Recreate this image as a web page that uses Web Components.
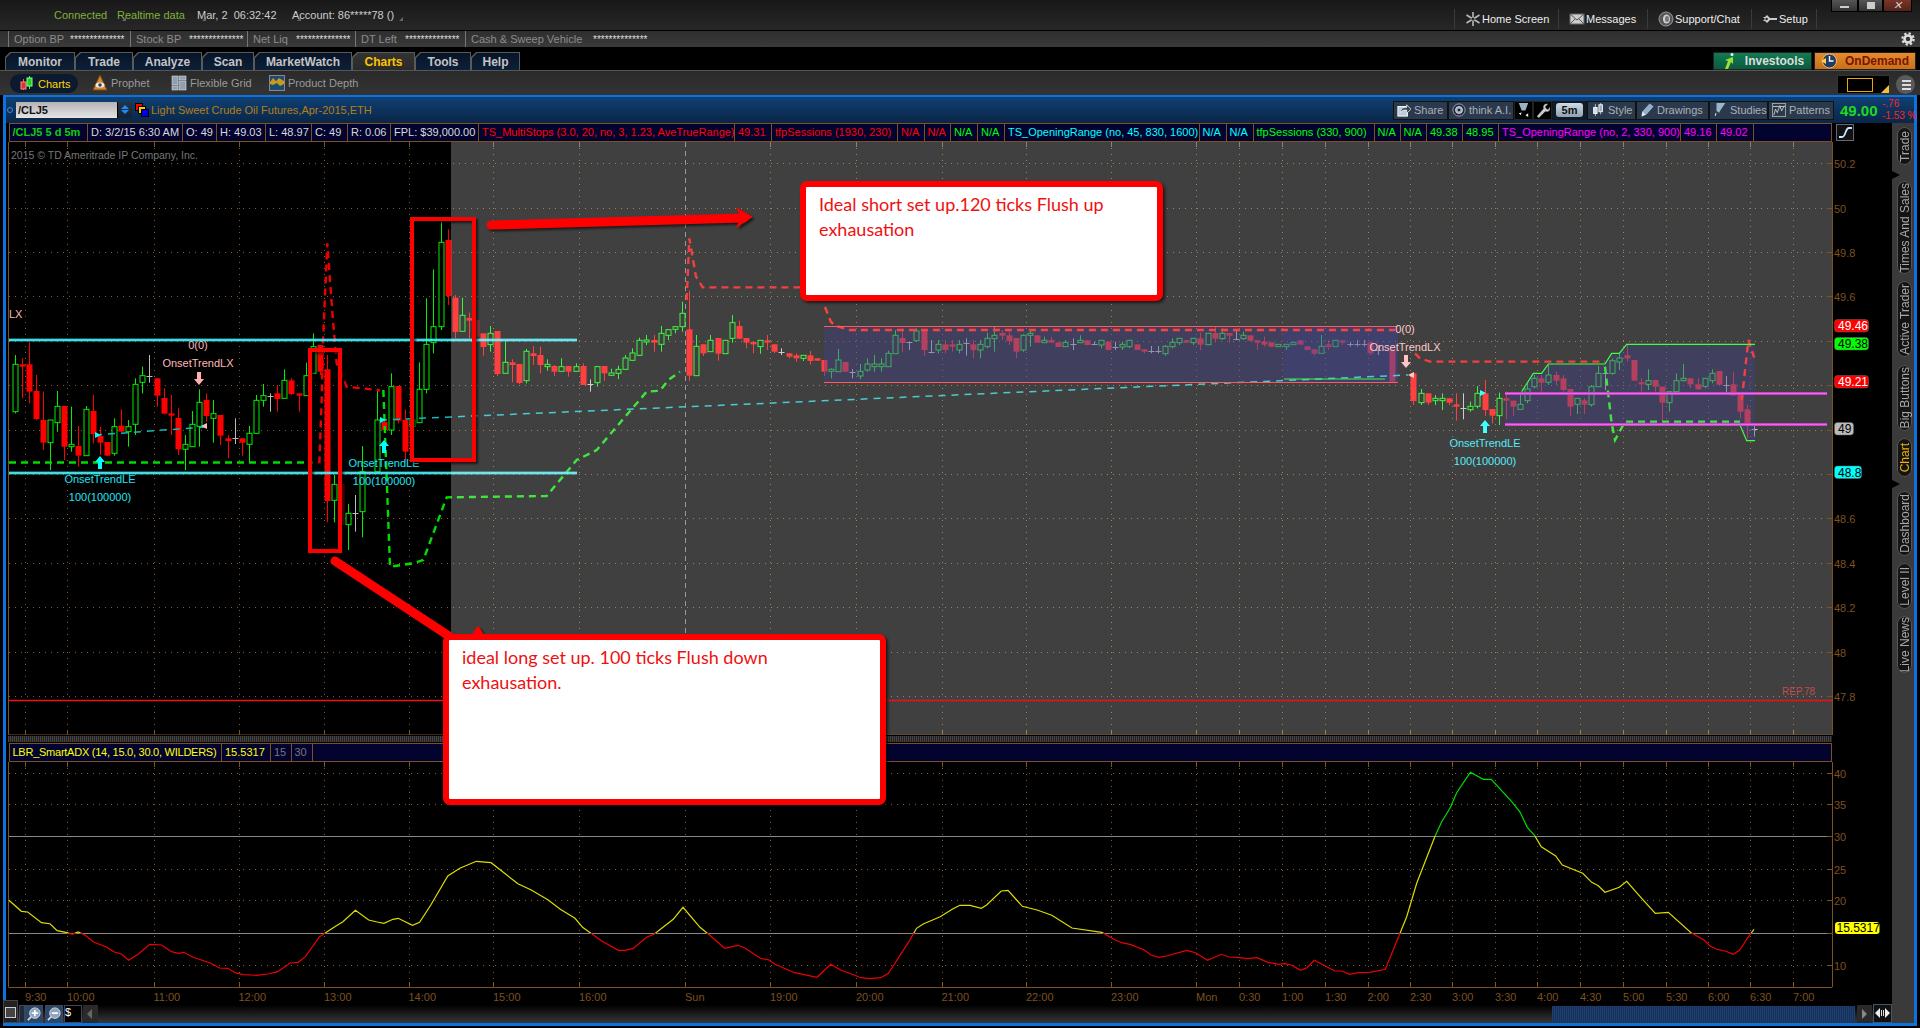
<!DOCTYPE html>
<html>
<head>
<meta charset="utf-8">
<title>Charts</title>
<style>
    html, body { margin: 0; padding: 0; background: #000; overflow: hidden; }
    body { width: 1920px; height: 1028px; position: relative; font: 11px "Liberation Sans", Arial, sans-serif; }
</style>
</head>
<body>
<tos-titlebar>
    <tos-nav-link icon="home" style="width:104px">Home Screen</tos-nav-link>
    <tos-nav-link icon="mail" style="width:89px">Messages</tos-nav-link>
    <tos-nav-link icon="chat" style="width:104px">Support/Chat</tos-nav-link>
    <tos-nav-link icon="setup" style="width:66px">Setup</tos-nav-link>
</tos-titlebar>
<tos-infobar></tos-infobar>
<tos-tabs>
    <tos-tab style="width:70px">Monitor</tos-tab>
    <tos-tab style="width:58px">Trade</tos-tab>
    <tos-tab style="width:69px">Analyze</tos-tab>
    <tos-tab style="width:52px">Scan</tos-tab>
    <tos-tab style="width:98px">MarketWatch</tos-tab>
    <tos-tab active style="width:63px">Charts</tos-tab>
    <tos-tab style="width:56px">Tools</tos-tab>
    <tos-tab style="width:49px">Help</tos-tab>
</tos-tabs>
<tos-subbar></tos-subbar>
<tos-panel>
    <tos-chart-header slot="header"></tos-chart-header>
    <tos-legend></tos-legend>
    <tos-price-chart></tos-price-chart>
    <div style="height:6px;margin:1px 60px 1px 2px;background:repeating-linear-gradient(90deg,#444 0 1px,#222 1px 2px)"></div>
    <tos-adx-legend></tos-adx-legend>
    <tos-adx-chart></tos-adx-chart>
    <tos-scrollbar></tos-scrollbar>
    <tos-side-tabs slot="side"></tos-side-tabs>
</tos-panel>
<tos-annotations>
    <tos-callout left="800" top="181" width="363" height="120">Ideal short set up.120 ticks Flush up<br>exhausation</tos-callout>
    <tos-callout left="443" top="634" width="443" height="171">ideal long set up. 100 ticks Flush down<br>exhausation.</tos-callout>
</tos-annotations>

<script>
const FONT = `"Liberation Sans", Arial, sans-serif`;
const BROWN = '#7d5120';

// hand drawn icons, 16x16 unless the view box says otherwise
const ICONS = {
    home: `<g stroke="#bbb" stroke-width="1.6"><path d="M8 1v14M1.5 4l13 8M1.5 12l13-8"/></g><circle cx="8" cy="8" r="1.6" fill="#222"/>`,
    mail: `<rect x="1" y="3" width="14" height="10" fill="#ccc" stroke="#666"/><path d="M1 3l7 6 7-6M1 13l5-5M15 13l-5-5" fill="none" stroke="#555"/>`,
    chat: `<circle cx="8" cy="8" r="7" fill="#555" stroke="#999"/><ellipse cx="8.5" cy="8" rx="3.6" ry="4.6" fill="#ccc"/><ellipse cx="9" cy="8" rx="2" ry="3" fill="#777"/>`,
    setup: `<path d="M1 6h2l2-2 3 3h7v2H8l-3 3-2-2H1l2-2z" fill="#ccc"/><circle cx="4.6" cy="8" r="1.2" fill="#222"/>`,
    gear: `<circle cx="8" cy="8" r="4" fill="none" stroke="#ddd" stroke-width="3"/><circle cx="8" cy="8" r="6.4" fill="none" stroke="#ddd" stroke-width="2.6" stroke-dasharray="2.6 2.4"/>`,
    candles: `<path d="M4.500 3v11" stroke="#f55"/><rect x="2" y="6" width="5" height="7" fill="#d33" stroke="#f88"/><path d="M10.500 0v13" stroke="#4f4"/><rect x="8" y="2" width="5" height="8" fill="#2c2" stroke="#8f8"/>`,
    prophet: `<path d="M8 0l7 15H1z" fill="#d8892c" stroke="#7a4a14"/><ellipse cx="8" cy="10" rx="4.500" ry="2.600" fill="#eee"/><circle cx="8" cy="10" r="1.800" fill="#246"/>`,
    grid: `<g fill="#8ea0b2" stroke="#ddd" stroke-width=".6"><rect x="1" y="1" width="6" height="9"/><rect x="8" y="1" width="7" height="4"/><rect x="8" y="6" width="7" height="9"/><rect x="1" y="11" width="6" height="4"/></g>`,
    depth: `<rect x=".5" y=".5" width="15" height="15" fill="#1d4a73" stroke="#888"/><path d="M1 7l3-4 3 3 3-3 5 3v3l-4 2-3-3-4 2-3-1z" fill="#c79a1c"/>`,
    share: `<rect x="1" y="4" width="11" height="11" fill="#bcd" stroke="#fff"/><path d="M4 11c0-5 3-6 7-6V2l5 5-5 5V8c-3 0-5 0-7 3z" fill="#345" stroke="#fff" stroke-width=".8"/>`,
    think: `<circle cx="8" cy="8" r="7" fill="#224" stroke="#aaa"/><circle cx="8" cy="8" r="4" fill="#9ab" stroke="#ddd"/><circle cx="8" cy="8" r="1.500" fill="#123"/>`,
    funnel: `<path d="M4 0h10l-6 9-1 2-3-2z" fill="#9ab4c8"/><path d="M3 11l1 1-1 3-1-1z" fill="#ddd"/>`,
    filterdl: `<path d="M3 0h10l-3 8H6z" fill="#9ab4c8"/><path d="M3 11l2 2 1-3zM13 15l-3-2 3-2z" fill="#eee"/>`,
    wrench: `<path d="M2 14l7-8c-1-3 1-6 5-5l-3 3 1 2 2 1 2-3c1 4-2 6-5 5l-7 7z" fill="#ccc" stroke="#333" stroke-width=".4"/>`,
    style: `<path d="M5 1v14M11 0v13" stroke="#bcd"/><rect x="3" y="5" width="4" height="7" fill="#cde" stroke="#fff"/><rect x="9" y="2" width="4" height="8" fill="#9ab" stroke="#fff"/>`,
    pencil: `<path d="M2 15l1-5 8-9 4 3-8 9z" fill="#8fb0cc" stroke="#dde" stroke-width=".6"/><path d="M2 15l1-5 3 3z" fill="#eee"/>`,
    patterns: `<rect x=".5" y=".5" width="15" height="15" fill="none" stroke="#aaa"/><path d="M2 14l2-7 2 4 3-8 2 6 3-6" fill="none" stroke="#ccc"/><path d="M1 4h14" stroke="#ccc"/>`,
    investools: `<path d="M4 16l3-8-3-1 8-3v7l-2-2-3 7z" fill="#9be03a"/><circle cx="11" cy="1.500" r="1.500" fill="#dfe"/>`,
    ondemand: `<circle cx="8.500" cy="8" r="7" fill="#223a66" stroke="#f0c060"/><path d="M8.500 3v5h4" fill="none" stroke="#fff" stroke-width="1.400"/><path d="M0 8l5-3v6z" fill="#ffd040"/>`,
    zoomin: `<path d="M1 15l4-4" stroke="#cde" stroke-width="2"/><circle cx="9" cy="7" r="6" fill="#8fa6ba" stroke="#dde"/><path d="M9 3.500v7M5.500 7h7" stroke="#fff" stroke-width="2"/>`,
    zoomout: `<path d="M1 15l4-4" stroke="#cde" stroke-width="2"/><circle cx="9" cy="7" r="6" fill="#8fa6ba" stroke="#dde"/><path d="M5.500 7h7" stroke="#fff" stroke-width="2"/>`,
};

class TosIcon extends HTMLElement {
    connectedCallback(){
        let size = this.getAttribute('size') || 16;
        this.attachShadow({mode: 'open'}).innerHTML = `
            <style>:host { display: inline-flex; flex: none; }</style>
            <svg width="${size}" height="${size}" viewBox="0 0 16 16">${ICONS[this.getAttribute('name')]}</svg>`;
    }
}

class TosTitlebar extends HTMLElement {
    connectedCallback(){
        this.attachShadow({mode: 'open'}).innerHTML = `
            <style>
                :host { display: flex; height: 30px; border-bottom: 1px solid #000; align-items: center;
                    background: linear-gradient(#181818, #272727); color: #ccc; font: 11px ${FONT}; }
                .status { display: flex; margin-left: 54px; }
                .status span { position: relative; }
                .status span::after { content: ''; position: absolute; right: -9px; bottom: 0;
                    border: 2px solid transparent; border-right-color: #666; border-bottom-color: #666; }
                .green { color: #7fb13a; }
                .links { display: flex; margin-left: auto; height: 20px; margin-top: 8px; }
                .win { display: flex; align-self: flex-start; margin: 0 8px 0 14px; height: 12px; }
                .win i { display: flex; align-items: center; justify-content: center; border: 1px solid #000; border-top: 0;
                    background: linear-gradient(#555, #333); box-sizing: border-box; }
                .win b { display: block; background: #ccc; }
            </style>
            <div class="status">
                <span class="green" style="width:63px">Connected</span>
                <span class="green" style="width:80px">Realtime data</span>
                <span style="width:95px">Mar, 2&nbsp;&nbsp;06:32:42</span>
                <span>Account: 86*****78 ()</span>
            </div>
            <div class="links"><slot></slot></div>
            <div class="win">
                <i style="width:27px"><b style="width:9px;height:2px;margin-top:3px"></b></i>
                <i style="width:25px"><b style="width:8px;height:7px"></b></i>
                <i style="width:29px;background:linear-gradient(#7a3428,#54231b);font:bold 10px ${FONT};color:#ddd;font-style:normal">✕</i>
            </div>`;
    }
}

class TosNavLink extends HTMLElement {
    connectedCallback(){
        this.attachShadow({mode: 'open'}).innerHTML = `
            <style>
                :host { display: flex; align-items: center; box-sizing: border-box; padding-left: 10px; gap: 1px;
                    border-left: 1px solid #3a3a3a; color: #eee; font: 11px ${FONT}; }
                :host(:last-child) { border-right: 1px solid #3a3a3a; }
            </style>
            <tos-icon name="${this.getAttribute('icon')}"></tos-icon><slot></slot>`;
    }
}

class TosInfobar extends HTMLElement {
    connectedCallback(){
        let cells = [['Option BP', 122, 56], ['Stock BP', 117, 53], ['Net Liq', 108, 43], ['DT Left', 110, 44], ['Cash & Sweep Vehicle', 300, 122]];
        this.attachShadow({mode: 'open'}).innerHTML = `
            <style>
                :host { display: flex; height: 16px; padding-left: 8px; align-items: center; position: relative;
                    background: linear-gradient(#2e2e2e, #3a3a3a); color: #8c8c8c; font: 11px ${FONT}; }
                div { display: flex; box-sizing: border-box; height: 16px; align-items: center; padding-left: 5px; border-left: 1px solid #777; }
                span { color: #ddd; font-size: 10px; white-space: nowrap; }
                b { display: block; font-weight: normal; flex: none; }
                tos-icon { position: absolute; right: 5px; top: 1px; }
            </style>
            ${cells.map(c => `<div style="width:${c[1]}px"><b style="width:${c[2]}px">${c[0]}</b><span>**************</span></div>`).join('')}
            <tos-icon name="gear" size="14"></tos-icon>`;
    }
}

class TosTabs extends HTMLElement {
    connectedCallback(){
        this.attachShadow({mode: 'open'}).innerHTML = `
            <style>
                :host { display: flex; height: 18px; margin-top: 5px; padding-left: 5px; }
                .right { display: flex; margin-left: auto; margin-right: 4px; gap: 2px; font: bold 12px ${FONT}; }
                .right div { display: flex; align-items: center; justify-content: center; gap: 8px; height: 18px; box-sizing: border-box; border: 1px solid #222; }
                .inv { width: 99px; background: linear-gradient(#127a52, #0b5a3f); color: #ddd; }
                .dem { width: 102px; background: linear-gradient(#e68a2e, #c86f18); color: #7a1500; }
            </style>
            <slot></slot>
            <div class="right">
                <div class="inv"><tos-icon name="investools"></tos-icon>Investools</div>
                <div class="dem"><tos-icon name="ondemand"></tos-icon>OnDemand</div>
            </div>`;
    }
}

class TosTab extends HTMLElement {
    connectedCallback(){
        let active = this.hasAttribute('active');
        this.attachShadow({mode: 'open'}).innerHTML = `
            <style>
                :host { display: block; background: #5a5a5a; padding: 1px 1px 0; box-sizing: border-box;
                    clip-path: polygon(5px 0, 100% 0, 100% 100%, 0 100%, 0 5px); }
                div { height: 100%; display: flex; align-items: center; justify-content: center;
                    clip-path: polygon(5px 0, 100% 0, 100% 100%, 0 100%, 0 5px);
                    background: ${active ? 'linear-gradient(#333, #2a2a2a)' : 'linear-gradient(#071428, #0c2038)'};
                    color: ${active ? '#ffc400' : '#c4c4c4'}; font: bold 12px ${FONT}; }
            </style>
            <div><slot></slot></div>`;
    }
}

class TosSubbar extends HTMLElement {
    connectedCallback(){
        this.attachShadow({mode: 'open'}).innerHTML = `
            <style>
                :host { display: flex; height: 24px; border-top: 1px solid #555; align-items: center; position: relative;
                    background: linear-gradient(#2a2a2a, #343434); color: #9a9a9a; font: 11px ${FONT}; }
                .it { display: flex; align-items: center; gap: 3px; position: absolute; top: 4px; }
                .pill { left: 10px; top: 3px; width: 68px; height: 19px; box-sizing: border-box; padding-left: 9px; gap: 3px;
                    background: #0b1a2e; border-radius: 10px; color: #ffd800; }
                .lay { position: absolute; left: 1837px; top: 4px; width: 53px; height: 19px; box-sizing: border-box;
                    background: #000; border: 1px solid #333; }
                .lay i { position: absolute; left: 9px; top: 2px; width: 26px; height: 14px; border: 1px solid #f0a800; box-sizing: border-box; }
                .lay b { position: absolute; right: 0; bottom: 0; border: 4px solid transparent; border-right-color: #f0c040; border-bottom-color: #f0c040; }
                .menu { position: absolute; left: 1896px; top: 4px; width: 19px; height: 19px; border-radius: 50%;
                    background: #5a5a5a; }
                .menu i { position: absolute; left: 6px; right: 4px; height: 2px; background: #ddd; }
            </style>
            <div class="it pill"><tos-icon name="candles"></tos-icon>Charts</div>
            <div class="it" style="left:92px"><tos-icon name="prophet"></tos-icon>Prophet</div>
            <div class="it" style="left:171px"><tos-icon name="grid"></tos-icon>Flexible Grid</div>
            <div class="it" style="left:269px"><tos-icon name="depth"></tos-icon>Product Depth</div>
            <div class="lay"><i></i><b></b></div>
            <div class="menu"><i style="top:5px"></i><i style="top:9px"></i><i style="top:13px"></i></div>`;
    }
}

class TosPanel extends HTMLElement {
    connectedCallback(){
        this.attachShadow({mode: 'open'}).innerHTML = `
            <style>
                :host { display: flex; flex-direction: column; box-sizing: border-box; width: 1914px; height: 931px; margin-left: 3px;
                    border: 3px solid #0b72e0; border-top-width: 2px; background: #000; }
                .row { display: flex; flex: 1; min-height: 0; }
                .main { width: 1886px; display: flex; flex-direction: column; }
            </style>
            <slot name="header"></slot>
            <div class="row">
                <div class="main"><slot></slot></div>
                <slot name="side"></slot>
            </div>`;
    }
}

class TosChartHeader extends HTMLElement {
    connectedCallback(){
        let btn = (w, icon, text) => `<div class="btn" style="width:${w}px"><tos-icon name="${icon}" size="14"></tos-icon>${text}</div>`;
        this.attachShadow({mode: 'open'}).innerHTML = `
            <style>
                :host { display: flex; height: 26px; align-items: center; position: relative;
                    background: linear-gradient(#0f4073, #0a2648); font: 11px ${FONT}; }
                .dot { width: 4px; height: 4px; margin-left: 1px; border: 1px solid #3a8ae0; border-radius: 50%; }
                .sym { width: 101px; height: 16px; margin-left: 3px; box-sizing: border-box; padding: 2px 2px; color: #111; font-weight: bold;
                    background: linear-gradient(#b4b4b4, #e4e4e4); }
                .spin { width: 15px; height: 16px; background: linear-gradient(#234, #123); position: relative; border-left: 1px solid #000; box-sizing: border-box; }
                .spin i { position: absolute; left: 3px; border: 4px solid transparent; }
                .flag { margin-left: 3px; width: 13px; height: 14px; position: relative; }
                .flag i { position: absolute; width: 6px; height: 6px; border: 1px solid #000; }
                .title { margin-left: 3px; color: #b37f18; }
                .btns { display: flex; margin-left: auto; height: 19px; }
                .btn { display: flex; align-items: center; gap: 3px; box-sizing: border-box; padding-left: 3px; height: 19px; white-space: nowrap; overflow: hidden;
                    background: #2a3a4c; border: 1px solid #111; color: #aab0b8; }
                .ib { width: 19px; height: 19px; background: #000; box-sizing: border-box; padding: 1px; border: 1px solid #222; }
                .five { width: 35px; display: flex; align-items: center; justify-content: center; background: #0f1a24; height: 19px; }
                .five b { background: linear-gradient(#cfdbe6, #8ea2b4); color: #111; font: bold 11px ${FONT}; padding: 1px 6px; border-radius: 3px; }
                .last { width: 80px; display: flex; align-items: center; padding-left: 6px; box-sizing: border-box; white-space: nowrap; }
                .last b { color: #1cdc1c; font: bold 15px ${FONT}; width: 42px; flex: none; }
                .last span { color: #f22; font-size: 10px; line-height: 12px; flex: none; }
            </style>
            <div class="dot"></div>
            <div class="sym">/CLJ5</div>
            <div class="spin"><i style="top:-1px;border-bottom-color:#28f"></i><i style="top:8px;border-top-color:#28f"></i></div>
            <div class="flag">
                <i style="left:0;top:0;background:#f00"></i><i style="left:3px;top:3px;background:#fc0"></i><i style="left:6px;top:6px;background:#00d"></i>
            </div>
            <div class="title">Light Sweet Crude Oil Futures,Apr-2015,ETH</div>
            <div class="btns">
                ${btn(55, 'share', 'Share')}${btn(66, 'think', 'think A.I.')}
                <div class="ib"><tos-icon name="filterdl" size="15"></tos-icon></div><div class="ib"><tos-icon name="wrench" size="15"></tos-icon></div>
                <div class="five"><b>5m</b></div>
                ${btn(49, 'style', 'Style')}${btn(73, 'pencil', 'Drawings')}${btn(59, 'funnel', 'Studies')}${btn(66, 'patterns', 'Patterns')}
            </div>
            <div class="last"><b>49.00</b><span>-.76<br>-1.53 %</span></div>`;
    }
}

// cell borders of a study legend, read off the reference, first one is the left edge
class TosLegend extends HTMLElement {
    cells(){
        let W = '#d8d8d8', R = '#f00', G = '#0f0', C = '#0ff', M = '#f0f';
        return [
            ['/CLJ5 5 d 5m', 87, '#1c1', 'bold'], ['D: 3/2/15 6:30 AM', 182, W], ['O: 49', 216, W], ['H: 49.03', 265, W], ['L: 48.97', 311, W],
            ['C: 49', 347, W], ['R: 0.06', 390, W], ['FPL: $39,000.00', 478, W],
            ['TS_MultiStops (3.0, 20, no, 3, 1.23, AveTrueRange)', 734, R], ['49.31', 771, R], ['tfpSessions (1930, 230)', 897, R],
            ['N/A', 923.5, R], ['N/A', 950, R], ['N/A', 977, G], ['N/A', 1004, G],
            ['TS_OpeningRange (no, 45, 830, 1600)', 1198.5, C], ['N/A', 1225.5, C], ['N/A', 1252.5, C],
            ['tfpSessions (330, 900)', 1373.5, G], ['N/A', 1399.5, G], ['N/A', 1426, G], ['49.38', 1462, G], ['48.95', 1498, G],
            ['TS_OpeningRange (no, 2, 330, 900)', 1680, M], ['49.16', 1716, M], ['49.02', 1752.5, M],
        ];
    }
    extra(){
        return `<svg width="18" height="17" viewBox="0 0 18 17"><rect x=".5" y=".5" width="17" height="16" fill="#111" stroke="#667"/><path d="M3 13h3c4 0 3-9 7-9h3" fill="none" stroke="#cfe4ff" stroke-width="1.800"/></svg>`;
    }
    connectedCallback(){
        let prev = 8.5;
        let cells = this.cells().map(c => {
            let html = `<div style="width:${c[1] - prev}px;color:${c[2]};font-weight:${c[3] || 'normal'};letter-spacing:${c[4] || 0}px">${c[0]}</div>`;
            prev = c[1];
            return html;
        }).join('');
        this.attachShadow({mode: 'open'}).innerHTML = `
            <style>
                :host { display: flex; height: 19px; margin-left: 2.500px; width: 1823.500px; box-sizing: border-box; position: relative;
                    background: #030330; border: 1px solid ${BROWN}; font: 11px ${FONT}; }
                div { box-sizing: border-box; height: 17px; line-height: 17px; padding-left: 3px; border-right: 1px solid ${BROWN}; white-space: nowrap; overflow: hidden; flex: none; }
                svg { position: absolute; left: 1826px; top: 0; }
            </style>
            ${cells}
            ${this.extra()}`;
    }
}

class TosAdxLegend extends TosLegend {
    cells(){
        return [['LBR_SmartADX (14, 15.0, 30.0, WILDERS)', 221, '#ff0', 'normal', -0.25], ['15.5317', 270, '#ff0'], ['15', 290.500, '#777'], ['30', 311.500, '#777']];
    }
    extra(){
        return '';
    }
}

// svg helpers shared by both panes; coordinates are page pixels, the view box maps them
function dotted(x1, y1, x2, y2, color){
    return `<line x1="${x1}" y1="${y1}" x2="${x2}" y2="${y2}" stroke="${color || '#86592a'}" stroke-dasharray="1 5"/>`;
}

const TIME_TICKS = [[25, '9:30'], [67, '10:00'], [153.5, '11:00'], [238.5, '12:00'], [324, '13:00'], [408.5, '14:00'], [493, '15:00'], [579, '16:00'], [685, 'Sun'],
    [770, '19:00'], [856, '20:00'], [941.5, '21:00'], [1026, '22:00'], [1111, '23:00'], [1196, 'Mon'], [1239, '0:30'], [1282, '1:00'], [1325, '1:30'], [1367.5, '2:00'],
    [1410, '2:30'], [1452, '3:00'], [1495, '3:30'], [1537, '4:00'], [1580, '4:30'], [1623, '5:00'], [1666, '5:30'], [1708, '6:00'], [1750, '6:30'], [1793, '7:00']];

function axisFrame(top, bottom, markSunday){
    let out = '';
    TIME_TICKS.forEach(t => {
        let x = Math.round(t[0]) + .5;
        out += `<line x1="${x}" y1="${top}" x2="${x}" y2="${top + 5}" stroke="${BROWN}"/>`;
        out += `<line x1="${x}" y1="${bottom - 5}" x2="${x}" y2="${bottom}" stroke="${BROWN}"/>`;
        out += (markSunday && t[1] == 'Sun')
            ? `<line x1="${x}" y1="${top}" x2="${x}" y2="${bottom}" stroke="#777" stroke-dasharray="5 4"/>`
            : dotted(x, top, x, bottom);
    });
    return out;
}

// candles traced from the reference. x body-top body-bottom wick-top wick-bottom kind
// g hollow green, r solid red, w grey doji, d dim red. Each block has its own origin and scale.
const CANDLES = [
    [0, 280, 3, `45 253 395 225 400 g;65 253 260 235 355 r;87 253 335 185 370 r;108 333 417 285 420 r;129 420 488 335 510 r;150 420 488 420 570 g;
171 379 428 333 455 g;192 378 500 378 540 r;213 493 500 380 515 g;234 498 527 438 560 r;257 388 527 378 527 g;279 393 462 345 490 r;300 468 488 440 525 r;
321 486 527 486 527 r;342 440 520 415 527 g;363 437 455 388 455 r;384 440 455 420 500 g;405 313 433 295 465 g;426 287 307 260 340 g;447 287 287 225 308 w;
471 295 347 295 380 r;492 354 401 325 401 r;513 400 407 345 465 r;534 414 508 385 525 r;555 493 508 465 570 g;576 433 500 393 500 g;597 367 439 328 500 g;
618 360 408 340 425 r;639 401 415 360 488 g;660 405 467 405 495 r;684 475 483 465 535 r;705 475 475 415 492 w;726 475 488 475 527 r;747 460 493 438 548 g;
768 361 460 345 460 g;789 347 361 312 380 g;810 347 347 340 395 w;831 340 357 315 395 r;852 301 355 268 355 g;873 301 342 295 345 r;896 340 347 345 395 r;
917 287 347 248 347 g;938 200 280 160 280 g;960 195 275 195 285 r;981 268 663 225 727 r;1002 613 661 585 727 g;1023 612 735 612 735 d`],
    [280, 200, 3, `204 940 974 912 1050 g;224 940 940 885 995 w;246 815 935 738 1012 g;268 815 820 815 820 r;290 660 815 570 815 g;312 665 690 660 690 r;333 560 690 520 705 g;
354 558 662 558 670 r;375 660 755 628 785 r;396 660 680 640 690 g;417 568 668 487 668 g;438 433 568 295 580 g;459 380 428 208 460 g;482 127 380 65 390 g;504 120 288 88 315 r;
525 293 396 285 415 r;546 346 394 293 394 g;567 354 362 338 415 r;588 360 410 360 410 d;609 400 441 400 467 r;630 400 434 378 455 g;651 393 522 393 528 r;675 487 520 423 520 g;
696 487 495 478 547 r;717 492 549 492 552 r;738 454 542 447 550 g;759 460 468 438 495 r;780 465 495 440 520 r;801 493 500 478 512 g;822 498 515 495 528 r;843 500 514 475 514 g;
864 498 515 498 530 r;888 500 514 490 514 g;909 498 555 490 555 r;930 553 553 538 575 w;951 500 548 498 560 g;972 498 520 498 543 r;993 519 526 506 526 g;1014 508 520 497 537 g;
1035 474 508 465 508 g;1056 459 481 445 481 g;1077 421 466 413 468 g;1098 420 426 405 435 g;1122 420 428 405 455 r;1143 400 433 378 455 g;1164 389 406 389 420 g;
1185 380 388 378 400 g;1206 340 380 305 395 g;1227 388 527 272 543 r;1248 439 527 405 527 g;1269 433 460 433 468 r;1290 421 455 405 455 g;1314 414 461 414 482 r;1335 421 461 421 461 g;
1356 368 415 345 428 g;1377 378 416 362 416 r;1398 414 428 414 445 r;1419 426 433 426 460 r;1440 421 440 421 461 g;1461 421 428 405 450 r;1482 433 455 433 460 r;1503 455 455 445 465 w`],
    [800, 290, 2.613, `-28 190 200 190 205 r;-10 196 205 190 215 r;8 196 205 196 213 g;26 196 213 183 224 r;45 205 212 205 212 r;63 210 245 210 258 r;81 238 244 235 265 g;99 210 245 177 245 g;117 216 245 216 245 r;135 245 245 237 265 w;
157 244 258 222 268 g;175 222 240 205 245 g;193 222 230 195 245 g;212 222 230 205 245 g;230 190 230 182 230 g;248 136 191 120 191 g;266 144 159 115 185 r;285 157 157 157 180 w;303 123 152 115 155 g;
324 117 180 117 197 r;342 185 185 150 190 w;360 163 180 150 190 g;379 163 180 150 190 r;397 163 170 150 185 r;415 163 180 150 190 g;433 158 158 145 197 w;452 163 180 150 205 r;470 163 180 150 205 g;
489 145 170 128 175 g;507 136 146 110 185 g;527 129 137 120 150 r;546 136 153 125 165 r;564 144 185 144 205 r;583 136 180 133 185 g;601 130 136 117 170 g;619 136 158 136 158 r;637 151 158 140 158 g;
656 150 158 140 158 r;674 157 171 157 171 r;693 157 170 150 170 g;713 162 162 145 180 w;732 151 158 136 158 g;750 151 165 151 165 r;768 162 162 155 165 w;787 151 165 150 175 g;805 155 180 155 180 r;
823 170 170 155 180 w;842 163 171 155 180 g;860 151 170 150 175 g;881 163 180 163 180 r;899 178 185 178 190 r;917 184 184 168 190 w;935 184 184 168 190 w;953 169 191 165 197 g;971 157 170 145 175 g;
990 145 158 145 165 g;1008 151 158 151 158 r;1026 145 158 145 165 g;1045 145 164 128 180 r;1065 130 164 130 164 g;1084 129 146 110 158 r;1102 130 146 115 150 g;1120 129 137 129 158 r;1138 146 146 122 150 w;
1157 136 146 125 150 g;1175 136 152 136 152 r;1194 151 158 151 180 r;1212 155 164 140 170 r;1230 157 170 157 170 r;1250 163 170 163 170 g;1270 163 170 163 180 g;1288 157 164 157 164 g;1306 151 164 151 164 r;
1325 169 180 169 180 r;1343 178 191 178 197 r;1361 169 190 135 190 g;1380 163 171 150 180 r;1398 151 170 150 170 g;1417 151 158 151 165 r;1437 163 163 155 170 w;1455 163 163 150 170 w;1473 163 163 150 170 w;
1490 157 190 155 195 r;1510 180 180 165 195 w;1547 180 275 175 275 r`],
    [1400, 290, 3, `40 250 333 250 345 r;62 310 338 297 345 g;84 310 338 310 345 r;105 325 332 315 345 g;126 325 332 310 360 g;147 325 338 325 345 r;168 343 350 310 392 r;189 355 355 310 388 w;210 349 359 335 365 g;
231 310 349 288 355 g;255 310 360 270 378 r;276 357 377 357 400 r;297 325 377 308 405 g;318 325 332 305 388 r;339 332 350 332 378 r;360 343 358 315 358 g;381 297 332 280 340 g;402 265 290 255 295 g;
423 265 278 255 305 r;444 255 277 225 285 g;468 255 272 245 285 r;489 265 300 255 305 r;510 297 350 297 378 r;531 325 343 325 372 g;552 331 344 325 372 r;573 290 344 285 350 g;594 250 290 228 290 g;
615 250 250 250 300 w;636 212 250 205 255 g;657 204 216 190 240 g;680 196 205 165 215 r;702 210 272 210 272 r;723 277 283 265 305 r;744 272 283 238 300 g;765 270 290 270 305 r;786 290 338 290 395 r;
807 305 338 305 365 g;828 272 305 250 310 g;849 265 272 222 275 g;870 265 283 265 295 r;894 283 298 265 300 r;915 265 289 265 295 g;936 250 272 238 280 g;957 243 284 243 288 r;978 284 284 258 310 w;
999 283 316 245 318 r;1020 313 365 313 385 r;1041 358 408 343 445 r;1062 418 418 405 440 w`],
];

function candleSvg(){
    let out = '';
    CANDLES.forEach(([ox, oy, sx, rows]) => {
        rows.split(';').forEach(row => {
            let [vx, bt, bb, wt, wb, kind] = row.trim().split(/\s+/);
            let x = Math.round(ox + vx / sx) + .5;
            let top = oy + bt / 3, bot = oy + bb / 3;
            let color = {g: '#0c0', r: '#f00', w: '#bbb', d: '#700'}[kind];
            out += `<line x1="${x}" y1="${oy + wt / 3}" x2="${x}" y2="${oy + wb / 3}" stroke="${kind == 'g' ? '#0e0' : color}"/>`;
            if(kind == 'w'){
                out += `<line x1="${x - 3}" y1="${Math.round(top) + .5}" x2="${x + 3}" y2="${Math.round(top) + .5}" stroke="${color}"/>`;
            } else if(kind == 'g'){
                out += `<rect x="${x - 2.5}" y="${top}" width="5" height="${bot - top}" fill="#000" stroke="#0e0" stroke-width="1"/>`;
            } else {
                out += `<rect x="${x - 3}" y="${top}" width="6" height="${bot - top}" fill="${color}"/>`;
            }
        });
    });
    return out;
}

class TosPriceChart extends HTMLElement {
    connectedCallback(){
        let yOf = p => 429.5 - (p - 49) * 222;
        let axis = '', grid = '';
        ['50.2', '50', '49.8', '49.6', '49.4', '49.2', '49', '48.8', '48.6', '48.4', '48.2', '48', '47.8'].forEach(p => {
            let y = Math.round(yOf(+p)) + .5;
            grid += dotted(9, y, 1827, y);
            axis += `<line x1="1827" y1="${y}" x2="1832" y2="${y}" stroke="${BROWN}"/>`;
            if(!['49.4', '49.2', '49', '48.8'].includes(p)){
                axis += `<text x="1834" y="${y + 4}" fill="${BROWN}">${p}</text>`;
            }
        });
        let tag = (y, w, bg, fg, text) => `<rect x="1834.5" y="${y}" width="${w}" height="12.5" rx="3" fill="${bg}" stroke="#666" stroke-width=".5"/><text x="1838" y="${y + 10.5}" fill="${fg}" font-size="12">${text}</text>`;
        let label = (x, y, color, text) => `<text x="${x}" y="${y}" fill="${color}" text-anchor="middle">${text}</text>`;
        let up = (x, y) => `<path d="M${x} ${y}l-5 6h3v7h4v-7h3z" fill="#0ff"/>`;
        let down = (x, y) => `<path d="M${x} ${y}l-5-6h3v-7h4v7h3z" fill="#ffb0b0"/>`;
        let PINK = '#ffb8b8', CY = '#1fe4f4';
        let line = (pts, color, extra) => `<polyline points="${pts}" fill="none" stroke="${color}" ${extra}/>`;
        let dash = 'stroke-width="2.400" stroke-dasharray="7 5"';
        let z8 = pts => pts.map(p => `${280 + p[0] / 3},${200 + p[1] / 3}`).join(' ');
        let z5 = pts => pts.map(p => `${1400 + p[0] / 3},${290 + p[1] / 3}`).join(' ');
        let stepLine = [[365, 305], [400, 250], [425, 250], [445, 222], [615, 222], [635, 190], [658, 190], [680, 163], [1065, 163]];
        let cloud2 = z5([[315, 310], ...stepLine, [1065, 452], [1040, 452], [1020, 405], [315, 405]]);
        this.attachShadow({mode: 'open'}).innerHTML = `
            <style>
                :host { display: block; height: 593px; }
                svg { display: block; font: 11px ${FONT}; }
            </style>
            <svg width="1886" height="593" viewBox="6 142 1886 593">
                <line x1="8.500" y1="142" x2="8.500" y2="735" stroke="${BROWN}"/>
                ${axisFrame(142, 735, true)}
                ${grid}
                ${candleSvg()}
                <!-- opening range clouds sit over the candles, the bright borders over the clouds -->
                <rect x="824" y="326" width="574" height="56" fill="#000064" fill-opacity=".4"/>
                <rect x="1284" y="326" width="114" height="56" fill="#0000a0" fill-opacity=".16"/>
                <polygon points="${cloud2}" fill="#000064" fill-opacity=".4"/>
                ${line('9,462.5 313,462.5', '#0d0', dash)}
                ${line(z8([[310, 570], [318, 780], [330, 1100], [400, 1090], [430, 1080], [500, 892], [800, 888], [890, 780], [950, 750], [1100, 575], [1140, 572], [1165, 540], [1200, 515]]), '#0d0', dash)}
                ${line(z5([[615, 230], [635, 400], [645, 450], [675, 395], [1020, 395]]), '#0d0', dash)}
                ${line(z8([[118, 790], [125, 600], [130, 400], [142, 130], [158, 350], [170, 490], [200, 560], [300, 571]]), '#e00', dash)}
                ${line(z8([[1220, 300], [1228, 115], [1248, 230], [1268, 262], [1580, 262]]), '#e00', dash)}
                ${line('825,307 831,322 836,326 850,330 1395,330', '#f00', dash)}
                ${line(z5([[45, 190], [60, 205], [90, 215], [615, 215]]), '#e00', dash)}
                ${line(z5([[1025, 330], [1032, 270], [1045, 150], [1065, 210]]), '#e00', dash)}
                ${line('95,435 207,427', '#10b8c0', 'stroke-width="1.500" stroke-dasharray="7 6"')}
                ${line('380,420 773,403 1068,390 1274,381 1408,375', '#10b8c0', 'stroke-width="1.500" stroke-dasharray="7 6"')}
                <line x1="824" y1="326.500" x2="1398" y2="326.500" stroke="#f22"/>
                <line x1="824" y1="382.500" x2="1398" y2="382.500" stroke="#f22"/>
                <line x1="1284" y1="379" x2="1385" y2="379" stroke="#0e0"/>
                ${line(z5(stepLine), '#0f0', 'stroke-width="1.200"')}
                ${line(z5([[1020, 405], [1040, 452], [1065, 452]]), '#0f0', 'stroke-width="1.200"')}
                <g stroke="#00dcec" stroke-width="3" stroke-opacity=".8"><line x1="9" y1="340" x2="577" y2="340"/><line x1="9" y1="473" x2="577" y2="473"/></g>
                <g stroke="#9ff" stroke-width="1"><line x1="9" y1="340" x2="577" y2="340"/><line x1="9" y1="473" x2="577" y2="473"/></g>
                <g stroke="#c000c0" stroke-width="3"><line x1="1505" y1="393.500" x2="1827" y2="393.500"/><line x1="1505" y1="424.500" x2="1827" y2="424.500"/></g>
                <g stroke="#d640d6" stroke-width="1"><line x1="1505" y1="393.500" x2="1827" y2="393.500"/><line x1="1505" y1="424.500" x2="1827" y2="424.500"/></g>
                <text x="1782" y="695" fill="#b01010" font-size="10">REP.78</text>
                <text x="11" y="159" fill="#777" font-size="10.500">2015 © TD Ameritrade IP Company, Inc.</text>
                <text x="9" y="318" fill="${PINK}">LX</text>
                ${label(198, 349, PINK, '0(0)')}${label(198, 367, PINK, 'OnsetTrendLX')}${down(199, 385)}
                ${up(100, 456)}${label(100, 483, CY, 'OnsetTrendLE')}${label(100, 501, CY, '100(100000)')}
                ${up(384, 440)}${label(384, 467, CY, 'OnsetTrendLE')}${label(384, 485, CY, '100(100000)')}
                ${up(1485, 420)}${label(1485, 447, CY, 'OnsetTrendLE')}${label(1485, 465, CY, '100(100000)')}
                ${label(1405, 333, PINK, '0(0)')}${label(1405, 351, PINK, 'OnsetTrendLX')}${down(1406, 368)}
                <path d="M95 432l6 3-6 3z" fill="#0ff"/><path d="M380 417l6 3-6 3z" fill="#0ff"/><path d="M1480 390l6 3-6 3z" fill="#0ff"/>
                <path d="M207 423l-6 3 6 3z" fill="${PINK}"/><path d="M1414 372l-6 3 6 3z" fill="${PINK}"/>
                <!-- the pale wash over everything right of the session start -->
                <rect x="451" y="142" width="1381" height="593" fill="#fff" fill-opacity=".25"/>
                <line x1="9" y1="700.500" x2="1832" y2="700.500" stroke="#ee1010" stroke-width="1.300"/>
                <line x1="8.500" y1="735" x2="1832" y2="735" stroke="${BROWN}"/>
                <line x1="1832.500" y1="142" x2="1832.500" y2="735" stroke="${BROWN}"/>
                ${axis}
                ${tag(319.5, 34, '#f00', '#fff', '49.46')}${tag(337.5, 34, '#0f0', '#000', '49.38')}${tag(375.5, 34, '#f00', '#fff', '49.21')}${tag(422.5, 19, '#bbb', '#000', '49')}${tag(466, 27, '#0ff', '#000', '48.8')}
            </svg>`;
    }
}

class TosAdxChart extends HTMLElement {
    connectedCallback(){
        let pts = [];
        [[0, 2.24, `20,541 48,574 62,576 93,608 112,611 128,632 150,638 162,643 175,636 190,645 210,666 238,681 255,695 273,703 288,721 310,702 335,673 362,675 384,695 400,700 412,697 432,712 470,728 492,744 510,745 527,758 545,764 575,766 600,762 622,755 650,729 668,727 684,710 716,650 750,620 768,605 796,571 826,600 845,606 860,610 880,598 892,595 924,616 940,607 965,555 1003,468 1030,445 1067,424 1100,428 1160,491 1190,510 1228,540 1255,568 1288,595 1305,622 1322,638 1348,663 1385,691 1400,691 1418,686 1448,652 1465,643 1508,598 1530,562 1568,622`],
         [700, 2.24, `22,646 55,685 85,676 100,683 135,715 155,720 168,733 212,758 262,772 293,733 315,750 345,765 360,773 380,776 405,773 422,760 468,665 485,625 500,612 538,590 565,568 582,556 605,556 630,565 642,555 675,513 690,511 722,559 755,570 788,586 833,624 900,637 930,660 945,668 965,674 995,690 1010,705 1028,712 1045,708 1090,691 1110,698 1137,721 1168,703 1185,711 1205,712 1225,716 1248,713 1272,727 1295,733 1310,731 1325,735 1345,751 1360,743 1376,721 1422,753 1438,753 1455,763 1475,758 1500,757 1535,748 1568,640`],
         [1400, 3, `20,590 50,490 105,349 125,305 150,265 170,218 211,157 250,178 274,178 335,245 360,276 382,322 403,345 424,380 467,408 487,435 548,460 575,487 595,497 615,517 658,502 680,484 725,535 766,580 805,577 873,638 912,660 930,678 950,688 975,693 1000,703 1020,689 1042,655 1062,628`]
        ].forEach(([ox, sx, str]) => str.split(' ').forEach(p => {
            let [x, y] = p.split(',');
            pts.push(`${(ox + x / sx).toFixed(1)},${(720 + y / 3).toFixed(1)}`);
        }));
        let points = pts.join(' ');
        let levels = '';
        [[40, 773], [35, 804], [30, 836], [25, 869], [20, 900], [15, 933], [10, 965]].forEach(([v, y]) => {
            y += .5;
            levels += (v == 30 || v == 15)
                ? `<line x1="9" y1="${y}" x2="1827" y2="${y}" stroke="#888"/>`
                : dotted(9, y, 1827, y);
            levels += `<line x1="1827" y1="${y}" x2="1832" y2="${y}" stroke="${BROWN}"/>`;
            if(v != 15){
                levels += `<text x="1834" y="${y + 4}" fill="${BROWN}">${v}</text>`;
            }
        });
        let times = TIME_TICKS.map(t => `<text x="${t[0]}" y="1001" fill="${BROWN}">${t[1]}</text>`).join('');
        this.attachShadow({mode: 'open'}).innerHTML = `
            <style>
                :host { display: block; height: 243px; }
                svg { display: block; font: 11px ${FONT}; }
            </style>
            <svg width="1886" height="243" viewBox="6 762 1886 243">
                <defs>
                    <clipPath id="up"><rect x="0" y="700" width="1900" height="136"/></clipPath>
                    <clipPath id="mid"><rect x="0" y="836" width="1900" height="97"/></clipPath>
                    <clipPath id="low"><rect x="0" y="933" width="1900" height="100"/></clipPath>
                </defs>
                <line x1="8.500" y1="762" x2="8.500" y2="987" stroke="${BROWN}"/>
                <line x1="1832.500" y1="762" x2="1832.500" y2="987" stroke="${BROWN}"/>
                <line x1="8.500" y1="987.500" x2="1832" y2="987.500" stroke="${BROWN}"/>
                ${axisFrame(762, 987, false)}
                ${levels}
                ${times}
                <polyline points="${points}" fill="none" stroke="#0d0" stroke-width="1.200" clip-path="url(#up)"/>
                <polyline points="${points}" fill="none" stroke="#dd0" stroke-width="1.200" clip-path="url(#mid)"/>
                <polyline points="${points}" fill="none" stroke="#e00" stroke-width="1.200" clip-path="url(#low)"/>
                <rect x="1835" y="922" width="44.500" height="12" rx="3" fill="#ff0"/>
                <text x="1836.500" y="932" fill="#000" font-size="12">15.5317</text>
            </svg>`;
    }
}

class TosScrollbar extends HTMLElement {
    connectedCallback(){
        this.attachShadow({mode: 'open'}).innerHTML = `
            <style>
                :host { display: block; height: 18px; position: relative; background: linear-gradient(#000, #383838); }
                div { position: absolute; box-sizing: border-box; }
                .b { top: 0; height: 18px; background: #1a2c40; border: 1px solid #445; }
                .thumb { left: 1546px; top: 1px; width: 303px; height: 16px;
                    background: repeating-linear-gradient(90deg, #1d3f6e 0 1px, #16325a 1px 2px); }
                .arrow { left: 1851px; top: 0; width: 15px; height: 18px; background: #2a2a2a; }
                .arrow i { position: absolute; left: 5px; top: 4px; border: 5px solid transparent; border-left-color: #888; }
                .grip { left: 1867px; top: -1px; width: 19px; height: 19px; background: #111; border: 1px solid #456; }
            </style>
            <div style="left:-3px;top:-5px;width:15px;height:23px;background:#222;border:1px solid #444"></div>
            <div style="left:-1px;top:2px;width:11px;height:11px;border:1px solid #ccc;background:#444"></div>
            <div class="b" style="left:13px;width:6px"></div>
            <div class="b" style="left:19px;width:18px;background:#28486a;padding:1px"><tos-icon name="zoomin" size="14"></tos-icon></div>
            <div class="b" style="left:39px;width:18px;background:#28486a;padding:1px"><tos-icon name="zoomout" size="14"></tos-icon></div>
            <div class="b" style="left:58px;width:18px;background:#000;color:#fff;font:bold 11px ${FONT};text-align:center;line-height:14px;text-decoration:underline">$</div>
            <div class="b" style="left:77px;width:15px;background:#2a2a2a;border:0"></div>
            <div style="left:81px;top:4px;border:5px solid transparent;border-right-color:#666;border-left:0"></div>
            <div class="thumb"></div>
            <div class="arrow"><i></i></div>
            <div class="grip"><svg width="17" height="17" viewBox="0 0 17 17"><path d="M1 8l5-5v10zM16 8l-5-5v10z" fill="#eee"/><path d="M7.500 5v6M9.500 5v6" stroke="#ddd"/></svg></div>`;
    }
}

class TosSideTabs extends HTMLElement {
    connectedCallback(){
        let tabs = [['Trade', 127, 165], ['Times And Sales', 181, 274], ['Active Trader', 281, 357], ['Big Buttons', 365, 431], ['Chart', 438, 477], ['Dashboard', 491, 556], ['Level II', 563, 609], ['Live News', 616, 673]];
        this.attachShadow({mode: 'open'}).innerHTML = `
            <style>
                :host { display: block; width: 22px; position: relative; background: #3a3a3a; color: #a8a8a8; font: 12px ${FONT}; }
                div { position: absolute; left: 5px; width: 15px; display: flex; align-items: center; justify-content: center; white-space: nowrap;
                    background: #141414; border-radius: 8px; box-shadow: 0 0 0 1px #555 inset; }
                span { writing-mode: vertical-rl; transform: rotate(180deg); }
                .on { color: #f0b400; }
                i { position: absolute; left: 0; border: 4px solid transparent; border-left: 8px solid #000; border-right: 0; }
            </style>
            ${tabs.map(t => `<div class="${t[0] == 'Chart' ? 'on' : ''}" style="top:${t[1] - 123}px;height:${t[2] - t[1]}px"><span>${t[0]}</span></div>`).join('')}
            <i style="top:48px"></i><i style="top:357px"></i>`;
    }
}

// everything the trader drew on top of the platform
class TosAnnotations extends HTMLElement {
    connectedCallback(){
        this.attachShadow({mode: 'open'}).innerHTML = `
            <style>
                :host { display: block; position: absolute; left: 0; top: 0; width: 1920px; height: 1028px; pointer-events: none; }
                svg { position: absolute; left: 0; top: 0; }
                g { filter: drop-shadow(2px 2px 1px rgba(0, 0, 0, .6)); }
            </style>
            <svg width="1920" height="1028" viewBox="0 0 1920 1028">
                <g fill="none" stroke="#f00">
                    <rect x="310" y="350" width="30" height="201" stroke-width="4"/>
                    <rect x="412" y="219" width="62" height="241" stroke-width="4"/>
                    <path d="M491 225L744 218" stroke-width="9" stroke-linecap="round"/>
                    <path d="M737 208L752 217L737 227L741 217z" fill="#f00" stroke-width="1"/>
                    <path d="M335 561L455 640" stroke-width="9" stroke-linecap="round"/>
                    <path d="M478 628L500 665L450 670z" fill="#f00" stroke-width="3" stroke-linejoin="round"/>
                </g>
            </svg>
            <slot></slot>`;
    }
}

class TosCallout extends HTMLElement {
    connectedCallback(){
        let a = n => this.getAttribute(n);
        this.attachShadow({mode: 'open'}).innerHTML = `
            <style>
                :host { display: block; position: absolute; box-sizing: border-box; background: #fff; border: 6px solid #f00; border-radius: 7px;
                    box-shadow: 2px 2px 3px rgba(0, 0, 0, .6); padding: 5px 13px; color: #f01010;
                    font: 18px/25px Lato, "Open Sans", sans-serif; overflow: hidden; }
            </style>
            <slot></slot>`;
        Object.assign(this.style, {left: a('left') + 'px', top: a('top') + 'px', width: a('width') + 'px', height: a('height') + 'px'});
    }
}

customElements.define('tos-icon', TosIcon);
customElements.define('tos-titlebar', TosTitlebar);
customElements.define('tos-nav-link', TosNavLink);
customElements.define('tos-infobar', TosInfobar);
customElements.define('tos-tabs', TosTabs);
customElements.define('tos-tab', TosTab);
customElements.define('tos-subbar', TosSubbar);
customElements.define('tos-panel', TosPanel);
customElements.define('tos-chart-header', TosChartHeader);
customElements.define('tos-legend', TosLegend);
customElements.define('tos-adx-legend', TosAdxLegend);
customElements.define('tos-price-chart', TosPriceChart);
customElements.define('tos-adx-chart', TosAdxChart);
customElements.define('tos-scrollbar', TosScrollbar);
customElements.define('tos-side-tabs', TosSideTabs);
customElements.define('tos-annotations', TosAnnotations);
customElements.define('tos-callout', TosCallout);
</script>
</body>
</html>
